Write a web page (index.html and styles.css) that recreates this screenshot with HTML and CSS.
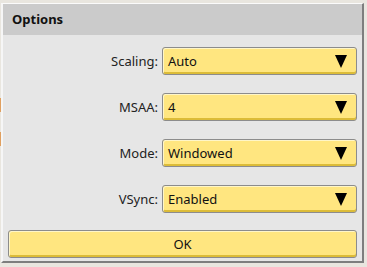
FILE: index.html
```html
<!DOCTYPE html>
<html>
<head>
<meta charset="utf-8">
<link rel="stylesheet" href="styles.css">
</head>
<body>
<div class="bg-mark bg-mark-1"></div>
<div class="bg-mark bg-mark-2"></div>
<div class="window">
  <div class="titlebar">Options</div>
  <div class="content">
    <div class="form">
      <div class="label">Scaling:</div>
      <div class="combo"><span>Auto</span><span class="arrow"></span></div>
      <div class="label">MSAA:</div>
      <div class="combo"><span>4</span><span class="arrow"></span></div>
      <div class="label">Mode:</div>
      <div class="combo"><span>Windowed</span><span class="arrow"></span></div>
      <div class="label">VSync:</div>
      <div class="combo"><span>Enabled</span><span class="arrow"></span></div>
    </div>
    <div class="button">OK</div>
  </div>
</div>
</body>
</html>
```

FILE: styles.css
```css
html, body {
  margin: 0;
  padding: 0;
}
body {
  background: #e9e6df;
  width: 367px;
  height: 267px;
  overflow: hidden;
  font-family: "Noto Sans", "Open Sans", sans-serif;
  font-size: 13px;
  color: #1a1a1a;
  position: relative;
}
.bg-mark {
  position: absolute;
  left: 0;
  width: 1px;
  background: #e0a060;
}
.bg-mark-1 { top: 98px; height: 14px; }
.bg-mark-2 { top: 132px; height: 14px; }
.window {
  margin: 3px 0 0 1px;
  width: 363px;
  height: 260px;
  box-sizing: border-box;
  border-top: 1px solid #fbfbfb;
  border-left: 2px solid #f6f6f6;
  border-right: 2px solid #7e7e7e;
  border-bottom: 2px solid #7e7e7e;
  background: #e6e6e6;
  display: flex;
  flex-direction: column;
}
.titlebar {
  height: 31px;
  background: #cbcbcb;
  font-weight: bold;
  font-size: 13px;
  line-height: 31px;
  padding-left: 9px;
  color: #111;
}
.content {
  flex: 1;
  padding: 12px 5px 4px 5px;
  display: flex;
  flex-direction: column;
}
.form {
  display: grid;
  grid-template-columns: 1fr 195px;
  grid-auto-rows: 28px;
  row-gap: 18px;
  column-gap: 4px;
  align-items: center;
}
.label {
  text-align: right;
  color: #222;
}
.combo, .button {
  height: 28px;
  box-sizing: border-box;
  border: 1px solid #8c8c8c;
  border-radius: 3px;
  background: #ffe680;
  box-shadow: inset 1px 1px 0 #fff6c8, inset 0 -2px 0 #dcbc38;
  display: flex;
  align-items: center;
  color: #111;
}
.combo {
  justify-content: space-between;
  padding: 0 9px 0 5px;
}
.arrow {
  width: 0;
  height: 0;
  border-left: 6px solid transparent;
  border-right: 6px solid transparent;
  border-top: 13px solid #000;
}
.button {
  margin-top: 17px;
  justify-content: center;
}
```
